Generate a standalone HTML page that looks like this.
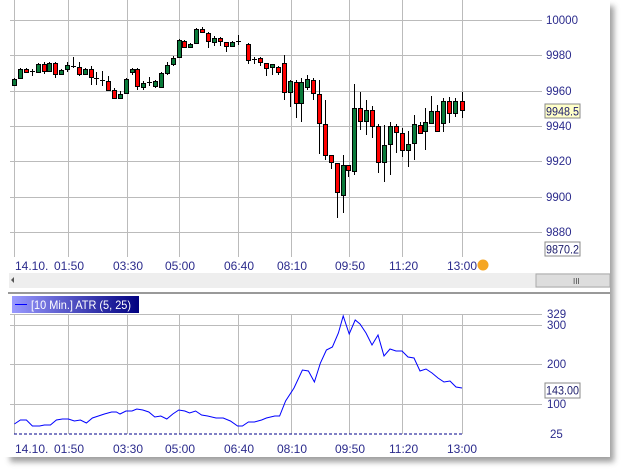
<!DOCTYPE html>
<html><head><style>
body{margin:0;width:626px;height:472px;background:#fff;overflow:hidden;font-family:"Liberation Sans",sans-serif}
</style></head><body>
<svg width="626" height="472" style="position:absolute;left:0;top:0" font-family="Liberation Sans, sans-serif" font-size="12">
<defs><filter id="sh"><feGaussianBlur stdDeviation="3"/></filter>
<linearGradient id="lg" x1="0" x2="1"><stop offset="0" stop-color="#9a9aff"/><stop offset="1" stop-color="#000080"/></linearGradient></defs>
<rect x="10" y="6" width="604" height="456" fill="#888" filter="url(#sh)" opacity="0.8"/>
<rect x="0" y="0" width="610" height="457" fill="#fff"/>
<g id="grid" stroke="#bbb" stroke-width="1"></g>
<g id="c"></g>
<g fill="#2b2b8c" id="lab" font-size="11.5"></g>
<rect x="545" y="104" width="35" height="14" fill="#ffffc8" stroke="#888"/>
<text x="546" y="115.5" fill="#1b1b6b" font-size="11.5" textLength="33" lengthAdjust="spacingAndGlyphs">9948.5</text>
<rect x="545" y="242" width="35" height="14" fill="#fff" stroke="#888"/>
<text x="546" y="253.5" fill="#1b1b6b" font-size="11.5" textLength="33" lengthAdjust="spacingAndGlyphs">9870.2</text>
<g fill="#2b2b8c">
<text x="15" y="270">14.10.</text><text x="54" y="270">01:50</text><text x="113" y="270">03:30</text><text x="165" y="270">05:00</text><text x="224" y="270">06:40</text><text x="277" y="270">08:10</text><text x="335" y="270">09:50</text><text x="389" y="270">11:20</text><text x="447" y="270">13:00</text>
<text x="15" y="453">14.10.</text><text x="54" y="453">01:50</text><text x="113" y="453">03:30</text><text x="165" y="453">05:00</text><text x="224" y="453">06:40</text><text x="277" y="453">08:10</text><text x="335" y="453">09:50</text><text x="389" y="453">11:20</text><text x="447" y="453">13:00</text>
</g>
<circle cx="483" cy="265" r="5.5" fill="#f5a623"/>
<rect x="9" y="273" width="601" height="15" fill="#eee"/>
<path d="M11 280 l3 -3 v6z" fill="#555"/>
<rect x="536" y="274" width="74" height="13" fill="#ddd" stroke="#aaa"/>
<text x="573" y="284" font-size="8" fill="#444">III</text>
<line x1="8" y1="293" x2="610" y2="293" stroke="#999" stroke-width="2"/>
<rect x="12" y="296" width="127" height="17" fill="url(#lg)"/>
<line x1="15" y1="304.5" x2="27" y2="304.5" stroke="#00f"/>
<text x="31" y="309" fill="#fff" textLength="100" lengthAdjust="spacingAndGlyphs">[10 Min.] ATR  (5, 25)</text>
<g fill="#2b2b8c" font-size="11.5"><text x="547" y="318">329</text><text x="547" y="329">300</text><text x="547" y="368">200</text><text x="547" y="408">100</text><text x="550" y="438">25</text></g>
<rect x="545" y="383" width="35" height="15" fill="#fff" stroke="#888"/>
<text x="546" y="394.5" fill="#1b1b6b" font-size="11.5" textLength="33" lengthAdjust="spacingAndGlyphs">143.00</text>
<line x1="14" y1="434" x2="462" y2="434" stroke="#00008b" stroke-dasharray="3,2"/>
<polyline id="atr" fill="none" stroke="#00f" stroke-width="1"/>
</svg>
<script>
var ns="http://www.w3.org/2000/svg",g=document.getElementById('grid'),c=document.getElementById('c'),lab=document.getElementById('lab');
function el(p,t,a){var e=document.createElementNS(ns,t);for(var k in a)e.setAttribute(k,a[k]);p.appendChild(e);return e;}
var S=1.2;
[14,68,127,179,238,291,349,402,462].forEach(function(x){el(g,'line',{x1:x+.5,y1:0,x2:x+.5,y2:257});el(g,'line',{x1:x+.5,y1:314,x2:x+.5,y2:434});});
[[20,'10000'],[55,'9980'],[91,'9960'],[126,'9940'],[161,'9920'],[197,'9900'],[232,'9880']].forEach(function(a){el(g,'line',{x1:10,y1:a[0]+.5,x2:542,y2:a[0]+.5});var t=el(lab,'text',{x:546,y:a[0]+4});t.textContent=a[1];});
[314,325,364,404].forEach(function(y){el(g,'line',{x1:10,y1:y+.5,x2:542,y2:y+.5});});
var d=[[12,'g',79,85,78,86],[17,'g',69,78,68,79],[22,'r',69,72,68,73],[27,'d',71,72,69,76],[32,'g',64,72,63,73],[37,'r',64,71,62,74],[41,'g',63,71,62,72],[46,'r',63,74,62,78],[51,'g',70,74,69,75],[56,'g',65,69,62,72],[61,'d',66,67,57,68],[66,'r',67,74,62,76],[71,'g',69,74,68,75],[76,'r',69,77,66,85],[80,'d',78,79,72,85],[85,'d',80,81,71,86],[90,'r',81,90,76,91],[95,'r',90,98,88,99],[100,'g',94,98,91,99],[105,'g',79,93,78,94],[110,'g',69,72,68,75],[114,'r',69,86,68,90],[119,'g',83,87,81,90],[124,'d',82,83,77,86],[129,'g',81,86,80,88],[134,'g',73,87,72,88],[139,'g',65,73,62,75],[144,'g',58,64,56,66],[149,'g',40,57,39,58],[153,'r',41,47,40,48],[158,'g',44,47,43,48],[163,'g',29,43,28,44],[168,'r',29,32,27,33],[173,'r',33,41,32,48],[178,'g',38,42,36,46],[183,'r',38,41,37,46],[188,'r',42,46,42,52],[193,'g',42,46,41,47],[198,'d',41,42,35,45],[207,'r',44,60,43,64],[212,'d',59,60,57,64],[217,'r',58,62,57,66],[222,'r',63,68,63,76],[227,'g',64,67,64,75],[232,'r',67,72,66,75],[237,'r',63,92,55,100],[242,'g',81,92,80,107],[247,'r',82,103,80,118],[251,'g',82,103,78,122],[256,'g',79,87,75,90],[261,'r',80,93,78,100],[266,'r',94,123,80,154],[271,'r',124,155,100,160],[276,'r',155,162,155,169],[281,'r',163,192,163,218],[286,'g',165,195,155,213],[290,'r',165,170,165,177],[295,'g',108,171,84,175],[300,'r',108,121,92,130],[305,'g',110,121,100,135],[310,'r',110,126,106,138],[315,'r',126,162,124,173],[320,'g',145,162,125,182],[325,'g',126,144,122,175],[330,'r',126,132,124,153],[335,'r',133,150,128,157],[340,'g',144,150,131,167],[345,'g',124,143,115,160],[350,'r',125,133,122,134],[354,'g',122,131,108,150],[359,'g',111,123,96,124],[364,'r',111,131,105,131],[369,'g',101,123,98,132],[374,'r',101,113,97,123],[379,'g',101,113,98,117],[385,'r',101,110,92,118]];
d.forEach(function(a){var x=Math.round(a[0]*S);el(c,'line',{x1:x+.5,y1:a[4],x2:x+.5,y2:a[5],stroke:'#000'});
if(a[1]=='d'){el(c,'line',{x1:x-2,y1:a[2]+.5,x2:x+3,y2:a[2]+.5,stroke:'#000'});}
else el(c,'rect',{x:x-1.5,y:a[2]+.5,width:4,height:a[3]-a[2],fill:a[1]=='g'?'#0a7a3a':'#f00',stroke:'#000','stroke-width':1});});
var p="12,424 17,420 22,420 27,426 33,426 37,425 42,425 47,420 52,419 57,419 62,421 67,420 72,423 77,418 82,416 87,414 93,412 97,412 100,414 105,411 110,411 114,409 119,410 124,412 129,417 134,416 139,419 144,414 149,410 154,411 158,413 163,411 168,415 173,416 180,418 186,418 192,421 198,426 202,426 207,422 212,422 218,420 222,418 229,416 233,416 238,401 245,388 252,370 257,371 262,382 267,363 272,350 277,347 282,333 286,316 291,334 296,320 300,324 305,333 310,345 315,335 320,356 325,349 330,351 335,351 340,357 345,358 350,371 355,369 360,373 365,378 370,382 375,381 380,387 385,388".split(' ').map(function(s){var q=s.split(',');return (q[0]*S).toFixed(1)+','+q[1];}).join(' ');
document.getElementById('atr').setAttribute('points',p);
</script>
</body></html>
